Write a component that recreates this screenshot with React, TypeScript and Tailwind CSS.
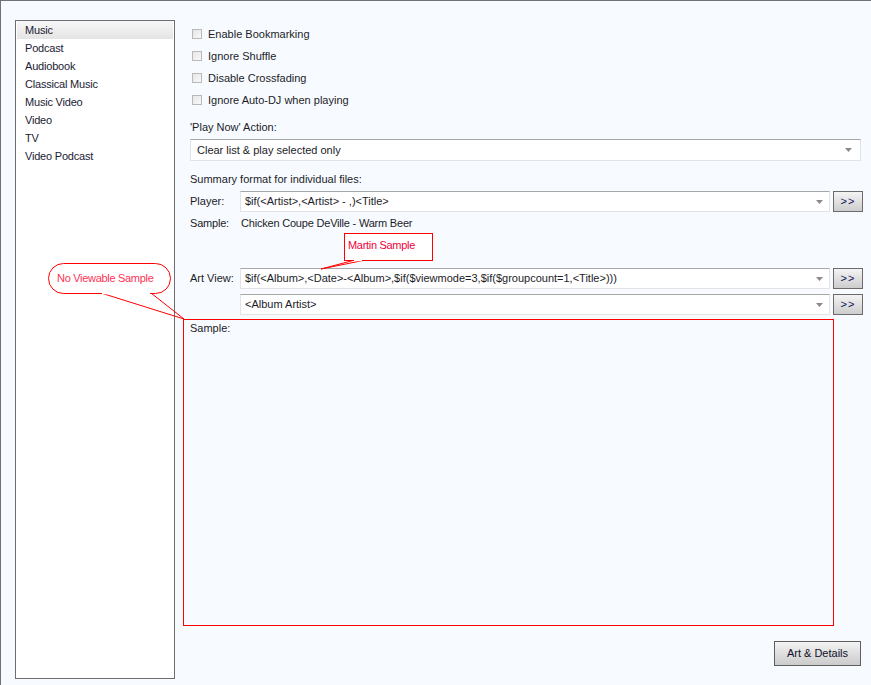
import React from 'react'

const font = { fontFamily: '"Liberation Sans", Arial, sans-serif' }

const categories = ['Music', 'Podcast', 'Audiobook', 'Classical Music', 'Music Video', 'Video', 'TV', 'Video Podcast']
const options = ['Enable Bookmarking', 'Ignore Shuffle', 'Disable Crossfading', 'Ignore Auto-DJ when playing']

function Arrow() {
  return (
    <svg width="7" height="4" viewBox="0 0 7 4" className="shrink-0">
      <path d="M0 0h7L3.5 4z" fill="#8a8a8a" />
    </svg>
  )
}

function Combo({ value, className = '' }: { value: string; className?: string }) {
  return (
    <div
      className={`flex items-center h-[21px] bg-white border border-[#e2e3e6] border-t-[#a6a6a6] pl-[4px] pr-[6px] ${className}`}
    >
      <span className="flex-1 truncate text-[11px] text-[#1c1c28]">{value}</span>
      <Arrow />
    </div>
  )
}

function MoreButton() {
  return (
    <button className="w-[30px] h-[21px] ml-[3px] flex items-center justify-center border border-[#6b6b6b] bg-gradient-to-b from-[#f4f4f4] to-[#cdcdcd] text-[11px] text-[#10105a] tracking-[1px]">
      &gt;&gt;
    </button>
  )
}

export default function App() {
  return (
    <div
      style={font}
      className="relative w-[871px] h-[685px] bg-[#f7fbff] border-t border-l border-[#6f7378] overflow-hidden flex pt-[19px] pl-[14px]"
    >
      <div className="w-[160px] h-[659px] shrink-0 bg-white border border-[#6e6e6e] px-[1px]">
        {categories.map((c, i) => (
          <div
            key={c}
            className={`h-[18px] flex items-center pl-[8px] text-[11px] tracking-[-0.2px] text-[#1b1b33] ${
              i === 0 ? 'bg-gradient-to-b from-[#f7f7f7] to-[#e4e4e4]' : ''
            }`}
          >
            {c}
          </div>
        ))}
      </div>

      <div className="ml-[8px] w-[680px] flex flex-col text-[11px] text-[#1c1c28]">
        <div className="mt-[3px] pl-[9px]">
          {options.map((o) => (
            <div key={o} className="h-[22px] flex items-center">
              <span className="w-[10px] h-[10px] border border-[#b9b9b9] bg-gradient-to-br from-[#e6e6e6] to-[#f8f8f8]" />
              <span className="ml-[6px]">{o}</span>
            </div>
          ))}
        </div>

        <div className="mt-[9px] pl-[7px] h-[14px] leading-[14px]">'Play Now' Action:</div>
        <div className="mt-[5px] ml-[7px] mr-[2px]">
          <Combo value="Clear list & play selected only" className="h-[22px] pl-[6px] pr-[8px]" />
        </div>

        <div className="mt-[11px] pl-[7px] h-[14px] leading-[14px]">Summary format for individual files:</div>
        <div className="mt-[5px] pl-[7px] flex items-center">
          <span className="w-[50px]">Player:</span>
          <Combo value="$if(<Artist>,<Artist> - ,)<Title>" className="w-[591px]" />
          <MoreButton />
        </div>
        <div className="mt-[4px] pl-[7px] h-[14px] leading-[14px] flex tracking-[-0.2px]">
          <span className="w-[51px]">Sample:</span>
          <span>Chicken Coupe DeVille - Warm Beer</span>
        </div>

        <div className="mt-[38px] pl-[7px] flex items-center">
          <span className="w-[50px]">Art View:</span>
          <Combo
            value="$if(<Album>,<Date>-<Album>,$if($viewmode=3,$if($groupcount=1,<Title>)))"
            className="w-[591px]"
          />
          <MoreButton />
        </div>
        <div className="mt-[5px] pl-[57px] flex items-center">
          <Combo value="<Album Artist>" className="w-[591px]" />
          <MoreButton />
        </div>

        <div className="mt-[4px] w-[651px] h-[307px] border border-[#ff0000] pl-[6px] leading-[14px] pt-[1px]">
          Sample:
        </div>

        <div className="mt-[15px] flex justify-end pr-[2px]">
          <button className="w-[87px] h-[25px] border border-[#5f5f5f] bg-gradient-to-b from-[#f3f3f3] to-[#cbcbcb] text-[11px] text-[#10102a]">
            Art &amp; Details
          </button>
        </div>
      </div>

      {/* callout lines */}
      <svg className="absolute left-0 top-0 pointer-events-none" width="871" height="685">
        <path d="M100 292 L183 318 L150 292" fill="none" stroke="#ff0000" strokeWidth="1" />
        <path d="M352 259.5 L320 268 L362 259.5" fill="white" stroke="#ff0000" strokeWidth="1" />
      </svg>

      <div className="absolute left-[47px] top-[262px] w-[123px] h-[31px] rounded-full border border-[#ff0000] bg-white flex items-center pl-[8px] text-[11px] text-[#ff3355] tracking-[-0.3px]">
        No Viewable Sample
      </div>
      <div className="absolute left-[343px] top-[232px] w-[89px] h-[28px] border border-[#ff0000] bg-white pl-[3px] pt-[3px] text-[11px] text-[#f0003c] tracking-[-0.3px]">
        Martin Sample
      </div>
      <svg className="absolute left-0 top-0 pointer-events-none" width="871" height="685">
        <path d="M101 292.5 L149 292.5" stroke="white" strokeWidth="1.5" />
        <path d="M353 259.5 L361 259.5" stroke="white" strokeWidth="1.5" />
      </svg>
    </div>
  )
}
